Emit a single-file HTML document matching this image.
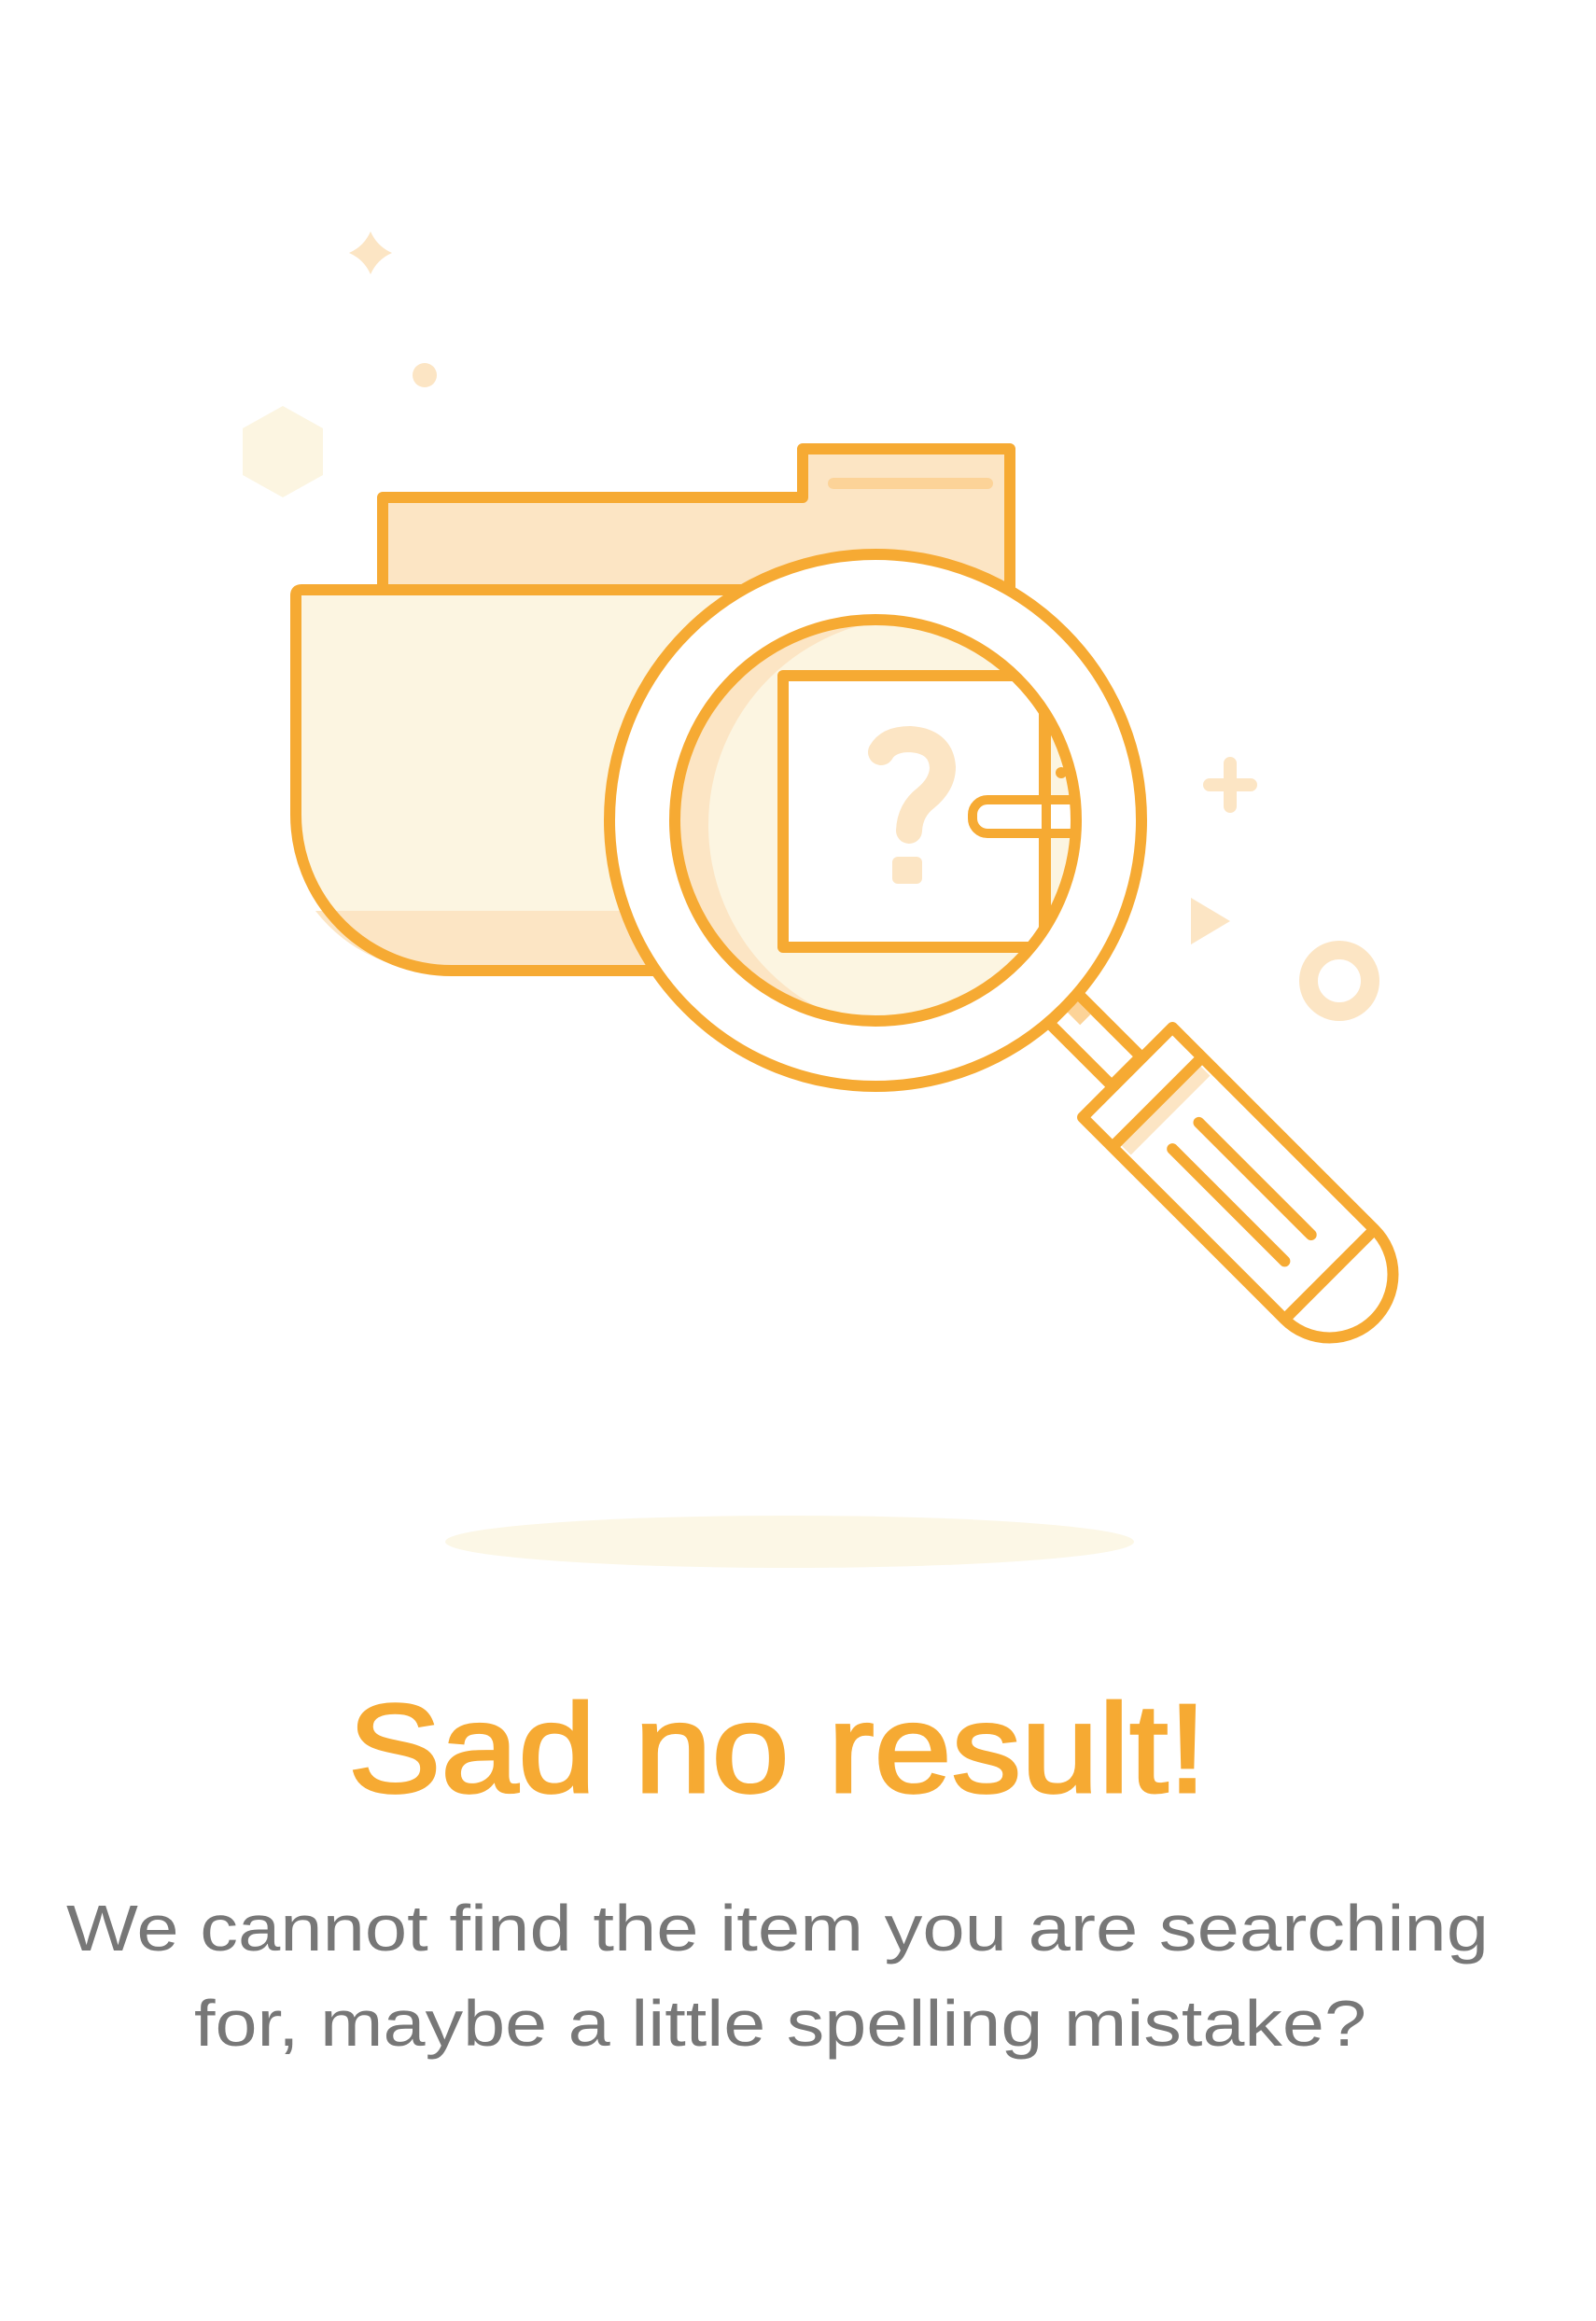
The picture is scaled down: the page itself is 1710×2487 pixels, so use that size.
<!DOCTYPE html>
<html><head><meta charset="utf-8"><style>
html,body{margin:0;padding:0;background:#fff;}
svg{display:block}
</style></head><body>
<svg width="1710" height="2487" viewBox="0 0 1710 2487" xmlns="http://www.w3.org/2000/svg">
<path d="M397 248 Q404 264 420 271 Q404 278 397 294 Q390 278 374 271 Q390 264 397 248Z" fill="#fce5c4"/>
<circle cx="455" cy="402" r="13" fill="#fce5c4"/>
<polygon points="303,435 346,459 346,509 303,533 260,509 260,459" fill="#fcf5e1"/>
<path d="M1318 818 V864 M1296 841 H1340" stroke="#fce5c4" stroke-width="14" stroke-linecap="round"/>
<polygon points="1276,962 1318,987 1276,1012" fill="#fce5c4"/>
<circle cx="1435" cy="1051" r="33" fill="none" stroke="#fce5c4" stroke-width="20"/>
<ellipse cx="846" cy="1652" rx="369" ry="28" fill="#fcf7e6"/>

<path d="M410 634 V533 H860 V481 H1082 V680 L410 680Z" fill="#fce5c4" stroke="#f6aa33" stroke-width="12" stroke-linejoin="round"/>
<line x1="893" y1="518" x2="1058" y2="518" stroke="#fcd398" stroke-width="12" stroke-linecap="round"/>
<path d="M323 632 H900 V1040 H484 A167 167 0 0 1 317 873 V638 Q317 632 323 632Z" fill="#fcf5e1"/>
<path d="M338 976 H900 V1040 H484 A167 167 0 0 1 338 976Z" fill="#fce5c4"/>
<path d="M900 632 H323 Q317 632 317 638 V873 A167 167 0 0 0 484 1040 H900" fill="none" stroke="#f6aa33" stroke-width="12" stroke-linejoin="round"/>

<g transform="rotate(45 938 879)">
  <rect x="1223" y="857" width="95" height="44" fill="#fff" stroke="#f6aa33" stroke-width="12" stroke-linejoin="round"/>
  <rect x="1228" y="863" width="20" height="16" fill="#fcd398"/>
  <path d="M1320 811 H1626 A68 68 0 0 1 1626 947 H1320Z" fill="#fff" stroke="#f6aa33" stroke-width="12" stroke-linejoin="round"/>
  <rect x="1371" y="819" width="14" height="120" fill="#fce5c4"/>
  <line x1="1365" y1="811" x2="1365" y2="947" stroke="#f6aa33" stroke-width="12"/>
  <line x1="1626" y1="811" x2="1626" y2="947" stroke="#f6aa33" stroke-width="12"/>
  <line x1="1412" y1="863" x2="1582" y2="863" stroke="#f6aa33" stroke-width="12" stroke-linecap="round"/>
  <line x1="1412" y1="903" x2="1582" y2="903" stroke="#f6aa33" stroke-width="12" stroke-linecap="round"/>
</g>

<circle cx="938" cy="879" r="285" fill="#fff" stroke="#f6aa33" stroke-width="12"/>
<clipPath id="inner"><circle cx="938" cy="879" r="215"/></clipPath>
<g clip-path="url(#inner)">
  <rect x="700" y="650" width="500" height="500" fill="#fce5c4"/>
  <circle cx="981" cy="884" r="222" fill="#fcf5e1"/>
  <rect x="839" y="724" width="280" height="313" fill="#fcf5e1"/>
  <rect x="839" y="724" width="280" height="291" fill="#fff" stroke="#f6aa33" stroke-width="12" stroke-linejoin="round"/>
  <line x1="1121" y1="757" x2="1121" y2="1007" stroke="#f6aa33" stroke-width="10"/>
  <rect x="1042" y="857" width="120" height="36" rx="16" fill="#fff" stroke="#f6aa33" stroke-width="10"/>
  <line x1="1121" y1="857" x2="1121" y2="893" stroke="#f6aa33" stroke-width="10"/>
  <circle cx="1137" cy="828" r="6" fill="#f6aa33"/>
  <path d="M944 806 Q952 792 975 792 Q1008 794 1010 822 Q1010 840 992 855 Q975 868 974 890" fill="none" stroke="#fce5c4" stroke-width="28" stroke-linecap="round"/>
  <rect x="956" y="918" width="32" height="29" rx="6" fill="#fce5c4"/>
</g>
<circle cx="938" cy="879" r="215" fill="none" stroke="#f6aa33" stroke-width="12"/>

<text x="833" y="1920" text-anchor="middle" textLength="920" lengthAdjust="spacingAndGlyphs" font-family="Liberation Sans, sans-serif" font-size="135" fill="#f6aa33" stroke="#f6aa33" stroke-width="3">Sad no result!</text>
<text x="71" y="2090" textLength="1524" lengthAdjust="spacingAndGlyphs" font-family="Liberation Sans, sans-serif" font-size="70" fill="#777">We cannot find the item you are searching</text>
<text x="208" y="2192" textLength="1256" lengthAdjust="spacingAndGlyphs" font-family="Liberation Sans, sans-serif" font-size="70" fill="#777">for, maybe a little spelling mistake?</text>
</svg>
</body></html>
